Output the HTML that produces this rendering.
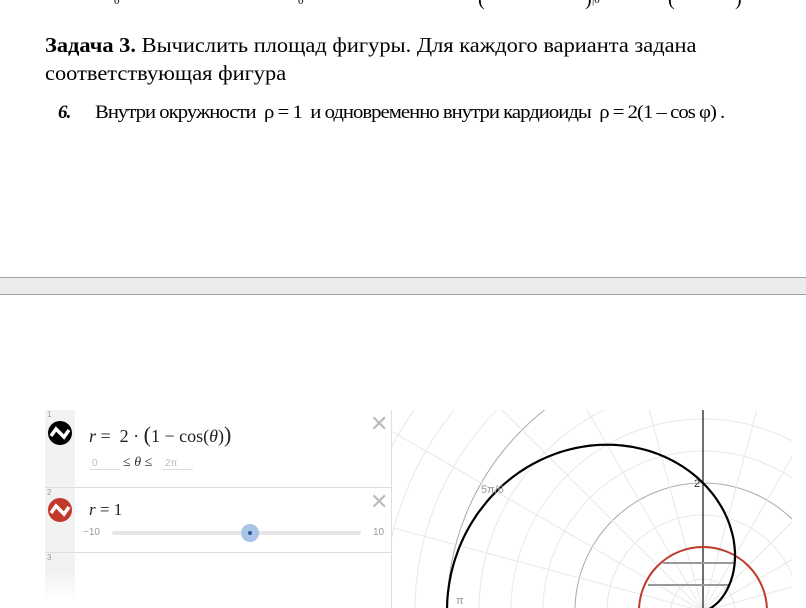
<!DOCTYPE html>
<html><head><meta charset="utf-8"><style>
html,body{margin:0;width:806px;height:608px;overflow:hidden;}
body{background:#fff;position:relative;font-family:"Liberation Serif",serif;}
.a{position:absolute;white-space:nowrap;}
</style></head><body>
<div class="a" style="left:114px;top:-5px;font-size:11px">0</div>
<div class="a" style="left:298px;top:-5px;font-size:11px">0</div>
<div class="a" style="left:478px;top:-12px;font-size:20px">(</div>
<div class="a" style="left:585px;top:-12px;font-size:20px">)</div>
<div class="a" style="left:592px;top:-6px;font-size:11px">|0</div>
<div class="a" style="left:668px;top:-12px;font-size:20px">(</div>
<div class="a" style="left:735px;top:-12px;font-size:20px">)</div>

<div class="a" style="left:45px;top:31px;font-size:21px;line-height:28px;transform:scaleX(1.068);transform-origin:left"><b>Задача 3.</b> Вычислить площад фигуры. Для каждого варианта задана<br>соответствующая фигура</div>
<div class="a" style="left:58px;top:102px;font-size:19px;letter-spacing:-0.9px"><b><i>6.</i></b></div>
<div class="a" style="left:95px;top:102px;font-size:19px;letter-spacing:-0.9px;transform:scaleX(1.09);transform-origin:left">Внутри окружности &nbsp;ρ = 1 &nbsp;и одновременно внутри кардиоиды &nbsp;ρ = 2(1 – cos φ) .</div>

<div class="a" style="left:0;top:277px;width:806px;height:16px;background:#ebebeb;border-top:1px solid #a0a0a0;border-bottom:1px solid #a0a0a0"></div>

<svg class="a" style="left:0;top:0" width="806" height="608" id="g">
<defs><clipPath id="c"><rect x="392" y="410" width="400" height="198"/></clipPath></defs>
<g id="grid" clip-path="url(#c)"></g>
</svg>

<div class="a" style="left:45px;top:410px;width:30px;height:190px;background:linear-gradient(#f2f2f2 85%,#fff)"></div>
<div class="a" style="left:45px;top:410px;width:346px;height:198px;border-right:1px solid #ddd"></div>
<div class="a" style="left:45px;top:487px;width:347px;border-top:1px solid #ddd"></div>
<div class="a" style="left:45px;top:552px;width:347px;border-top:1px solid #ddd"></div>
<div class="a" style="left:47px;top:410px;font:8px 'Liberation Sans',sans-serif;color:#999">1</div>
<div class="a" style="left:47px;top:488px;font:8px 'Liberation Sans',sans-serif;color:#999">2</div>
<div class="a" style="left:47px;top:553px;font:8px 'Liberation Sans',sans-serif;color:#999">3</div>
<svg class="a" style="left:48px;top:421px" width="24" height="24"><circle cx="12" cy="12" r="12" fill="#000"/><path d="M3 15 L8 8 L16 16 L21 9" stroke="#fff" stroke-width="3.5" fill="none"/></svg>
<svg class="a" style="left:48px;top:498px" width="24" height="24"><circle cx="12" cy="12" r="12" fill="#c0392b"/><path d="M3 15 L8 8 L16 16 L21 9" stroke="#fff" stroke-width="3.5" fill="none"/></svg>
<div class="a" style="left:89px;top:422px;font-size:18px;color:#222"><i>r</i> = &nbsp;2 · <span style="font-size:22px">(</span>1 − cos(<i>θ</i>)<span style="font-size:22px">)</span></div>
<div class="a" style="left:89px;top:458px;width:28px;border-bottom:1px solid #ddd;font:10px 'Liberation Sans',sans-serif;color:#bbb;padding-left:3px">0</div>
<div class="a" style="left:123px;top:455px;font-size:14px;color:#333">≤ <i>θ</i> ≤</div>
<div class="a" style="left:162px;top:458px;width:28px;border-bottom:1px solid #ddd;font:10px 'Liberation Sans',sans-serif;color:#bbb;padding-left:3px">2π</div>
<div class="a" style="left:89px;top:500px;font-size:17px;color:#222"><i>r</i> = 1</div>
<div class="a" style="left:83px;top:527px;font:10px 'Liberation Sans',sans-serif;color:#999">−10</div>
<div class="a" style="left:373px;top:527px;font:10px 'Liberation Sans',sans-serif;color:#999">10</div>
<div class="a" style="left:112px;top:531px;width:249px;height:4px;border-radius:2px;background:#e6e6e6"></div>
<div class="a" style="left:241px;top:524px;width:18px;height:18px;border-radius:9px;background:#a9c4e6"></div>
<div class="a" style="left:248px;top:531px;width:4px;height:4px;border-radius:2px;background:#2a5a9a"></div>
<div class="a" style="left:370px;top:411px;font:22px 'Liberation Sans',sans-serif;color:#bbb">✕</div>
<div class="a" style="left:370px;top:489px;font:22px 'Liberation Sans',sans-serif;color:#bbb">✕</div>

<script>
var g=document.getElementById('grid'),ox=703,oy=611,u=64,s='';
for(var i=1;i<=12;i++){var r=i*0.5*u;var d=(i%4==0);s+='<circle cx="'+ox+'" cy="'+oy+'" r="'+r+'" fill="none" stroke="'+(d?'#aaa':'#e8e8e8')+'" stroke-width="1"/>';}
for(var k=0;k<24;k++){var a=k*Math.PI/12;s+='<line x1="'+ox+'" y1="'+oy+'" x2="'+(ox+900*Math.cos(a))+'" y2="'+(oy-900*Math.sin(a))+'" stroke="#e8e8e8"/>';}
s+='<line x1="'+ox+'" y1="400" x2="'+ox+'" y2="608" stroke="#222" stroke-width="1.3"/>';
s+='<line x1="663" y1="563" x2="735" y2="563" stroke="#999" stroke-width="2"/>';
s+='<line x1="648" y1="585" x2="729" y2="585" stroke="#999" stroke-width="2"/>';
s+='<circle cx="'+ox+'" cy="'+oy+'" r="'+u+'" fill="none" stroke="#c0392b" stroke-width="2"/>';
var p='';for(var t=0;t<=360;t++){var th=t*Math.PI/180,r=2*(1-Math.cos(th))*u;p+=(t?'L':'M')+(ox+r*Math.cos(th)).toFixed(1)+' '+(oy-r*Math.sin(th)).toFixed(1);}
s+='<path d="'+p+'" fill="none" stroke="#000" stroke-width="2.2"/>';
s+='<text x="694" y="487" font-family="Liberation Sans" font-size="11" fill="#333">2</text>';
s+='<text x="481" y="493" font-family="Liberation Sans" font-size="11" fill="#999">5π/6</text>';
s+='<text x="456" y="604" font-family="Liberation Sans" font-size="11" fill="#999">π</text>';
g.innerHTML=s;
</script>
</body></html>
